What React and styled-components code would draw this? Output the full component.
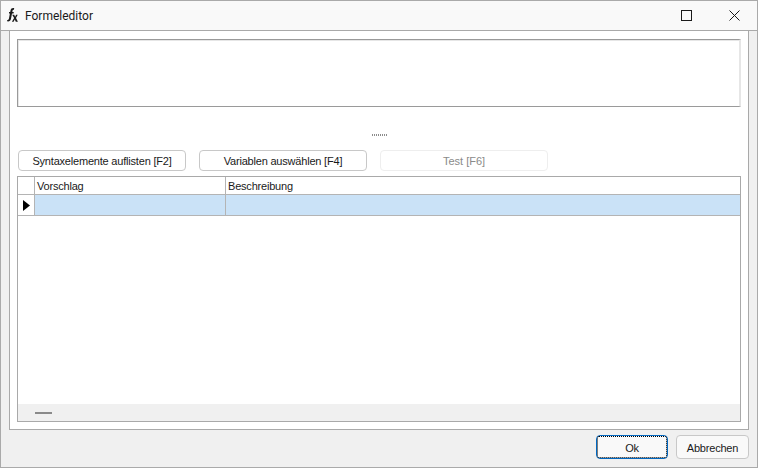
import React from "react"
import styled, { createGlobalStyle } from "styled-components"

const Global = createGlobalStyle`
    html, body { margin: 0; padding: 0; background: #f0f0f0; }
    body { font-family: "Liberation Sans", Arial, sans-serif; font-size: 11px; letter-spacing: -.2px; color: #1a1a1a; }
`;
const Win = styled.div`
    width: 758px;
    height: 468px;
    box-sizing: border-box;
    border: 1px solid #aaaaaa;
    display: flex;
    flex-direction: column;
    background: #f0f0f0;
`;
const TitleBar = styled.div`
    height: 30px;
    box-sizing: border-box;
    flex: none;
    display: flex;
    align-items: flex-start;
    background: #f9f9f9;
    border-bottom: 1px solid #a9a9a9;
    padding: 7px 0 0 6px;
`;
const AppIcon = styled.svg`
    width: 11px;
    height: 14px;
    flex: none;
`;
const TitleText = styled.div`
    margin-left: 7px;
    font-family: Roboto, sans-serif;
    font-size: 12px;
    letter-spacing: 0;
    line-height: 16px;
    flex: 1;
`;
const WinButton = styled.div`
    width: ${p => p.$w}px;
    margin-top: 2px;
    display: flex;
    justify-content: center;
`;
const Panel = styled.div`
    margin: 0 8px;
    height: 399px;
    box-sizing: border-box;
    border: 1px solid #a9a9a9;
    border-top: none;
    background: #fff;
    padding: 8px 7px 7px 7px;
    display: flex;
    flex-direction: column;
`;
const Editor = styled.div`
    height: 68px;
    flex: none;
    box-sizing: border-box;
    border: 1px solid #9a9a9a;
    border-right: 2px solid #e6e6e6;
    box-shadow: inset 1px 1px 0 #e6e6e6;
`;
const Splitter = styled.div`
    height: 43px;
    flex: none;
    display: flex;
    justify-content: center;
    padding-top: 27px;
    box-sizing: border-box;
`;
const Grip = styled.div`
    width: 15px;
    height: 2px;
    margin-left: 1px;
    background: repeating-linear-gradient(to right, #8c8c8c 0 1px, #fff 1px 2px);
`;
const ButtonRow = styled.div`
    display: flex;
    gap: 13px;
    padding-left: 1px;
    flex: none;
`;
const Button = styled.div`
    width: ${p => p.$w}px;
    height: 21px;
    box-sizing: border-box;
    border: 1px solid ${p => (p.$disabled ? "#eeeeee" : "#c8c8c8")};
    border-radius: 4px;
    background: #fff;
    color: ${p => (p.$disabled ? "#8a8a8a" : "#1a1a1a")};
    letter-spacing: ${p => (p.$disabled ? "0" : "-.2px")};
    display: flex;
    align-items: center;
    justify-content: center;
`;
const Grid = styled.div`
    margin-top: 5px;
    flex: 1;
    box-sizing: border-box;
    border: 1px solid #a9a9a9;
    display: flex;
    flex-direction: column;
`;
const Row = styled.div`
    display: flex;
    height: ${p => p.$h}px;
    flex: none;
    box-sizing: border-box;
    border-bottom: 1px solid #b4b4b4;
`;
const RowHead = styled.div`
    width: 17px;
    flex: none;
    box-sizing: border-box;
    border-right: 1px solid #b4b4b4;
    display: flex;
    align-items: center;
    justify-content: center;
`;
const Cell = styled.div`
    box-sizing: border-box;
    width: ${p => (p.$w ? `${p.$w}px` : "auto")};
    flex: ${p => (p.$w ? "none" : 1)};
    padding-left: 2px;
    line-height: 18px;
    background: ${p => (p.$selected ? "#cae2f7" : "#fff")};
    border-right: ${p => (p.$w ? "1px solid #b4b4b4" : "none")};
`;
const GridBody = styled.div`
    flex: 1;
`;
const ScrollBar = styled.div`
    height: 17px;
    flex: none;
    background: #f0f0f0;
    display: flex;
    align-items: center;
    padding-left: 17px;
`;
const ScrollThumb = styled.div`
    width: 17px;
    height: 2px;
    background: #8a8a8a;
`;
const Footer = styled.div`
    flex: 1;
    display: flex;
    justify-content: flex-end;
    align-items: flex-start;
    gap: 8px;
    padding: 5px 8px 0 0;
`;
const DialogButton = styled.div`
    width: ${p => p.$w}px;
    height: 24px;
    box-sizing: border-box;
    padding-top: 2px;
    border-radius: 4px;
    background: #f9f9f9;
    border: 1px solid ${p => (p.$default ? "#0067c0" : "#c8c8c8")};
    display: flex;
    align-items: center;
    justify-content: center;
    position: relative;
    ${p => p.$default && `
        &::after {
            content: "";
            position: absolute;
            inset: 0;
            border: 1px dotted #000;
            border-radius: 2px;
        }
    `}
`;

function App() {
    return (
        <Win>
            <Global />
            <TitleBar>
                <AppIcon viewBox="0 0 11 14">
                    <path d="M7.2 0.2C5.2-.2 3.9.6 3.5 2.6L3.2 4H2v1.5h.9L1.9 10.8c-.2 1-.6 1.3-1.6 1.1L0 13.3c2.2.4 3.5-.4 4-2.6L5 5.5h1.5L6.8 4H5.3l.2-1.1c.1-.9.6-1.2 1.4-1z" fill="#1a1a1a" />
                    <path d="M5.2 6.8h2l.9 1.9 1-1.9h1.6L9 9.9l1.9 3.8H8.8l-1-2.3-1.2 2.3H4.9l2.2-3.6z" fill="#1a1a1a" />
                </AppIcon>
                <TitleText>Formeleditor</TitleText>
                <WinButton $w={47}>
                    <svg width="11" height="11" viewBox="0 0 11 11"><rect x=".5" y=".5" width="10" height="10" fill="none" stroke="#1a1a1a" /></svg>
                </WinButton>
                <WinButton $w={2} />
                <WinButton $w={45}>
                    <svg width="11" height="11" viewBox="0 0 11 11"><path d="M.5.5l10 10M10.5.5l-10 10" fill="none" stroke="#1a1a1a" /></svg>
                </WinButton>
            </TitleBar>
            <Panel>
                <Editor />
                <Splitter><Grip /></Splitter>
                <ButtonRow>
                    <Button $w={168}>Syntaxelemente auflisten [F2]</Button>
                    <Button $w={168}>Variablen auswählen [F4]</Button>
                    <Button $w={168} $disabled>Test [F6]</Button>
                </ButtonRow>
                <Grid>
                    <Row $h={18}>
                        <RowHead />
                        <Cell $w={191}>Vorschlag</Cell>
                        <Cell>Beschreibung</Cell>
                    </Row>
                    <Row $h={21}>
                        <RowHead>
                            <svg width="7" height="11" viewBox="0 0 7 11"><path d="M0 0l7 5.5L0 11z" fill="#000" /></svg>
                        </RowHead>
                        <Cell $w={191} $selected />
                        <Cell $selected />
                    </Row>
                    <GridBody />
                    <ScrollBar><ScrollThumb /></ScrollBar>
                </Grid>
            </Panel>
            <Footer>
                <DialogButton $w={72} $default>Ok</DialogButton>
                <DialogButton $w={73}>Abbrechen</DialogButton>
            </Footer>
        </Win>
    );
}

export default App;
